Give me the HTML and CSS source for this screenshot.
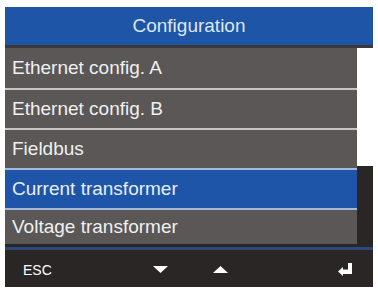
FILE: index.html
```html
<!DOCTYPE html>
<html>
<head>
<meta charset="utf-8">
<link rel="stylesheet" href="styles.css">
</head>
<body>
<div class="screen">
  <div class="header">Configuration</div>
  <div class="header-line"></div>
  <div class="content">
    <div class="list">
      <div class="row">Ethernet config. A</div>
      <div class="row">Ethernet config. B</div>
      <div class="row">Fieldbus</div>
      <div class="row selected">Current transformer</div>
      <div class="row">Voltage transformer</div>
    </div>
    <div class="scrollbar"><div class="thumb"></div></div>
  </div>
  <div class="footer-line"></div>
  <div class="footer">
    <span class="esc">ESC</span>
    <svg class="tri down" width="15" height="7" viewBox="0 0 15 7"><polygon points="0,0 15,0 7.5,7" fill="#fff"/></svg>
    <svg class="tri up" width="15" height="7" viewBox="0 0 15 7"><polygon points="0,7 15,7 7.5,0" fill="#fff"/></svg>
    <svg class="enter" width="16" height="13" viewBox="0 0 16 13"><path d="M11 0h4v11H6v2L1 8.5 6 4v2.5h5z" fill="#fff"/></svg>
  </div>
</div>
</body>
</html>
```
FILE: styles.css
```css
html, body { margin: 0; padding: 0; background: #fff; }
body { font-family: "Liberation Sans", Arial, sans-serif; }
.screen {
  margin: 7px 0 0 5px;
  width: 368px;
  height: 280px;
  background: #2a2625;
  display: flex;
  flex-direction: column;
}
.header {
  height: 38px;
  background: #1f55a6;
  color: #dce7f6;
  font-size: 19px;
  display: flex;
  align-items: center;
  justify-content: center;
}
.header-line { height: 3px; background: #3a3838; }
.content { display: flex; }
.list { width: 352px; display: flex; flex-direction: column; }
.row {
  height: 38px;
  background: #5a5756;
  color: #f0f0f0;
  font-size: 19px;
  display: flex;
  align-items: center;
  padding-left: 7px;
  border-top: 2px solid #c9c7c6;
}
.row:first-child { border-top: none; height: 40px; }
.row.selected {
  background: #1e55a8;
  color: #e6eefa;
  border-top-color: #a6b8d8;
  border-bottom: 2px solid #a6b8d8;
}
.row.selected + .row { border-top: none; height: 34px; }
.scrollbar { width: 16px; background: #2a2625; }
.thumb { height: 118px; background: #fff; }
.footer-line { height: 3px; background: #2c4a78; margin-top: 3px; }
.footer {
  flex: 1;
  position: relative;
  color: #fff;
}
.esc { position: absolute; left: 18px; top: 12px; font-size: 14px; }
.tri { position: absolute; top: 16px; }
.tri.down { left: 148px; }
.tri.up { left: 208px; }
.enter { position: absolute; left: 332px; top: 13px; }
```
